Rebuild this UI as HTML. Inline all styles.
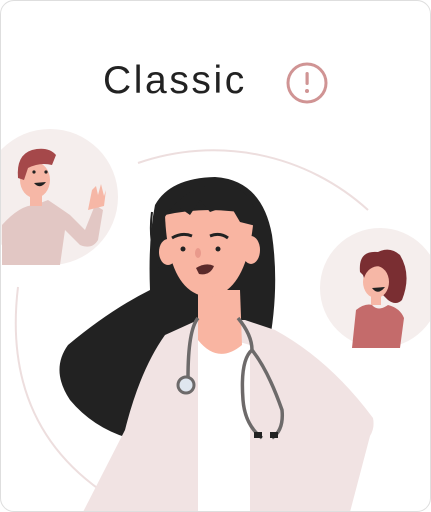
<!DOCTYPE html>
<html><head><style>
html,body{margin:0;padding:0;background:#fff;overflow:hidden;width:431px;height:512px;}
.card{position:absolute;left:0;top:0;width:431px;height:512px;box-sizing:border-box;border:1px solid #dedede;border-radius:14px;overflow:hidden;background:#fff;}
.t{position:absolute;left:102px;top:58px;font-family:"Liberation Sans",sans-serif;font-size:39px;color:#222;letter-spacing:2.6px;}
</style></head><body>
<div class="card">
<svg width="431" height="512" viewBox="0 0 431 512" style="position:absolute;left:-1px;top:-1px">
<path d="M138 163 A230 230 0 0 1 368 210" fill="none" stroke="#eddede" stroke-width="2"/>
<path d="M18 287 Q2 420 100 490" fill="none" stroke="#eddede" stroke-width="2"/>
<!-- man circle -->
<circle cx="50" cy="197" r="68" fill="#f5eeed"/>
<path d="M2 225 Q20 205 35 205 L48 200 Q60 208 70 215 L85 230 L95 205 L103 210 L98 240 Q92 250 80 245 L65 230 L60 265 L2 265Z" fill="#e2c7c4"/>
<path d="M88 210 L92 190 L96 186 L98 195 L101 184 L104 196 L106 190 L104 206 Z" fill="#f6b7a6"/>
<ellipse cx="35" cy="180" rx="15" ry="18" fill="#f6b7a6"/>
<rect x="30" y="192" width="12" height="14" fill="#f6b7a6"/>
<path d="M18 178 Q16 155 32 150 Q48 146 56 155 L52 165 Q40 162 28 168 L24 180Z" fill="#a5484a"/>
<circle cx="34" cy="172" r="1.6" fill="#222"/><circle cx="46" cy="172" r="1.6" fill="#222"/>
<path d="M34 183 Q40 190 46 182Z" fill="#222"/>
<!-- girl circle -->
<circle cx="380" cy="288" r="60" fill="#f5eeed"/>
<path d="M352 348 L356 310 Q365 303 372 305 Q378 312 388 305 Q400 308 404 318 L400 348Z" fill="#c46b6b"/>
<path d="M360 272 Q358 250 378 252 Q390 246 400 255 Q412 275 402 300 Q396 306 388 300 Z" fill="#7a2e32"/>
<ellipse cx="376" cy="282" rx="13" ry="16" fill="#f6b7a6"/>
<rect x="371" y="293" width="10" height="12" fill="#f6b7a6"/>
<path d="M362 272 Q368 258 388 262 L380 266 Q368 266 364 278Z" fill="#7a2e32"/>
<path d="M372 288 Q378 296 385 287Z" fill="#222"/>
<!-- doctor hair -->
<path d="M155 205 Q170 178 215 177 Q262 180 272 235 Q280 290 268 350 L200 380 Q150 420 135 440 Q95 430 70 400 Q50 370 68 345 Q110 310 150 290 Q148 240 155 205Z" fill="#222"/>
<path d="M152 212 Q148 240 158 268" fill="none" stroke="#222" stroke-width="2"/>
<!-- coat -->
<path d="M165 335 L198 320 L245 320 L275 330 Q330 360 373 418 Q375 428 370 436 L350 512 L83 512 L125 430 Q140 370 165 335Z" fill="#f1e3e3"/>
<path d="M198 330 L198 512 L250 512 L250 345Z" fill="#fff"/>
<!-- neck & face -->
<path d="M198 290 L240 290 L242 345 Q218 365 198 340Z" fill="#f9b5a2"/>
<ellipse cx="168" cy="252" rx="9" ry="13" fill="#f9b5a2"/>
<ellipse cx="251" cy="250" rx="9" ry="14" fill="#f9b5a2"/>
<path d="M165 215 Q168 295 210 297 Q248 292 254 215 Q210 205 165 215Z" fill="#f9b5a2"/>
<path d="M160 225 Q165 205 180 208 L190 215 L200 200 L210 212 L230 205 L240 222 L256 226 Q258 195 230 185 Q185 180 160 225Z" fill="#222"/>
<path d="M172 238 Q182 232 192 236" stroke="#222" stroke-width="3" fill="none"/>
<path d="M210 236 Q220 232 228 238" stroke="#222" stroke-width="3" fill="none"/>
<circle cx="183" cy="249" r="2.5" fill="#222"/><circle cx="218" cy="249" r="2.5" fill="#222"/>
<ellipse cx="198" cy="253" rx="3" ry="5" fill="#e99a8c"/>
<path d="M196 268 Q206 262 214 266 Q210 276 199 274Z" fill="#5a2a2a"/>
<!-- stethoscope -->
<path d="M198 318 Q188 330 188 378" stroke="#6d6a6a" stroke-width="3.5" fill="none"/>
<circle cx="186" cy="385" r="8" fill="#dfe6ef" stroke="#6d6a6a" stroke-width="3"/>
<path d="M238 318 Q252 335 252 350 Q240 360 243 400 Q245 425 262 438 M252 350 Q268 370 282 410 Q284 430 272 438" stroke="#6d6a6a" stroke-width="3.5" fill="none"/>
<rect x="254" y="432" width="8" height="6" fill="#222"/><rect x="270" y="432" width="8" height="6" fill="#222"/>
<!-- info icon -->
<circle cx="307" cy="83" r="19" fill="none" stroke="#d09494" stroke-width="3"/>
<rect x="305.5" y="72" width="3.2" height="13" rx="1.6" fill="#d09494"/>
<circle cx="307" cy="91" r="2" fill="#d09494"/>
</svg>
<div class="t">Classic</div>
</div>
</body></html>
